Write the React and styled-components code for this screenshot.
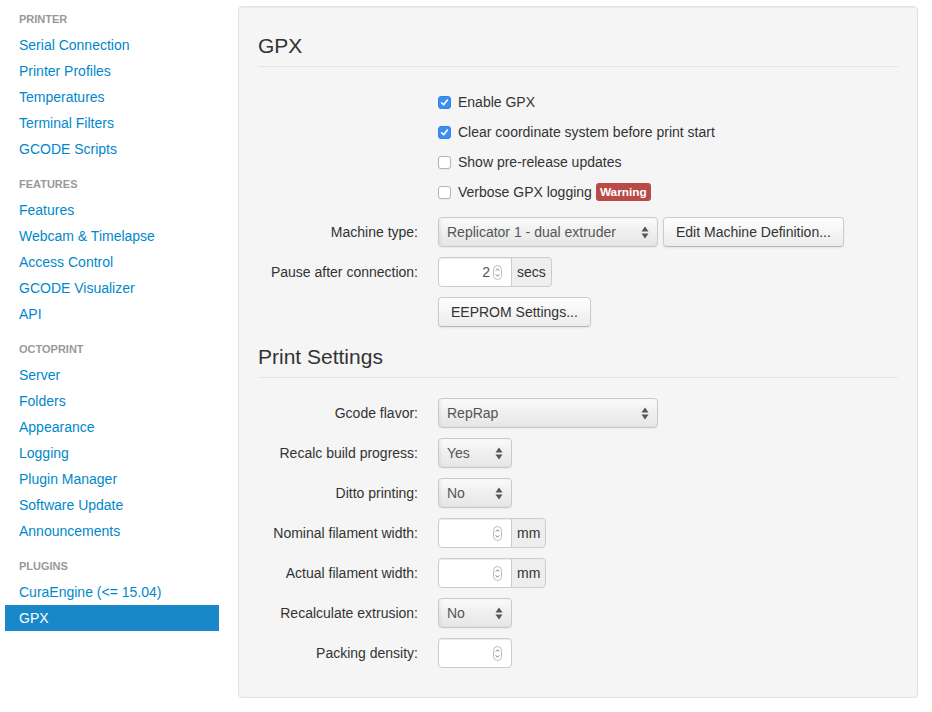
import React from "react";
import styled, { createGlobalStyle } from "styled-components";

const Global = createGlobalStyle`
  html, body { margin: 0; padding: 0; background: #fff; }
  body { font-family: "Liberation Sans", Arial, sans-serif; font-size: 14px; line-height: 20px; color: #333; }
  * { box-sizing: border-box; }
`;

const Page = styled.div`
  display: flex;
  align-items: flex-start;
  width: 932px;
  height: 712px;
  padding-top: 6px;
`;

const Sidebar = styled.ul`
  list-style: none;
  margin: 0 0 0 5px;
  padding: 0;
  width: 214px;
  flex: none;
`;

const NavHeader = styled.li`
  padding: 3px 14px;
  font-size: 11px;
  line-height: 20px;
  font-weight: bold;
  color: #999;
  text-transform: uppercase;
  text-shadow: 0 1px 0 rgba(255,255,255,.5);
  margin-top: ${(p) => (p.$first ? 0 : 9)}px;
`;

const NavItem = styled.li`
  padding: 3px 14px;
  font-size: 14px;
  line-height: 20px;
  color: ${(p) => (p.$active ? "#fff" : "#0088cc")};
  background: ${(p) => (p.$active ? "#1888c9" : "transparent")};
  cursor: pointer;
`;

const Panel = styled.div`
  margin-left: 19px;
  width: 680px;
  background: #f5f5f5;
  border: 1px solid #e3e3e3;
  border-radius: 4px;
  padding: 19px;
  box-shadow: inset 0 1px 1px rgba(0,0,0,.05);
`;

const Legend = styled.div`
  font-size: 21px;
  line-height: 40px;
  color: #333;
  border-bottom: 1px solid #e5e5e5;
  margin-bottom: 20px;
`;

const Group = styled.div`
  display: flex;
  margin-bottom: 10px;
`;

const Label = styled.div`
  width: 160px;
  flex: none;
  text-align: right;
  padding-top: 5px;
  line-height: 20px;
`;

const Controls = styled.div`
  margin-left: 20px;
  display: flex;
  flex-direction: ${(p) => (p.$stack ? "column" : "row")};
  align-items: ${(p) => (p.$stack ? "flex-start" : "center")};
  gap: ${(p) => (p.$stack ? 0 : 5)}px;
`;

const CheckLabel = styled.label`
  display: flex;
  align-items: center;
  padding: 5px 0;
  line-height: 20px;
  gap: 7px;
`;

const Box = styled.span`
  width: 13px;
  height: 13px;
  flex: none;
  border-radius: 3px;
  display: inline-flex;
  align-items: center;
  justify-content: center;
  background: ${(p) => (p.$checked ? "#3a8ff2" : "#fff")};
  border: 1px solid ${(p) => (p.$checked ? "#3483e6" : "#b4b4b4")};
  box-shadow: ${(p) => (p.$checked ? "none" : "0 1px 1px rgba(0,0,0,.06)")};
`;

const Badge = styled.span`
  display: inline-block;
  background: #b94a48;
  color: #fff;
  font-weight: bold;
  font-size: 11.8px;
  line-height: 14px;
  padding: 2px 4px;
  border-radius: 3px;
  margin-left: -3px;
`;

const Select = styled.div`
  width: ${(p) => p.$w}px;
  height: 30px;
  border: 1px solid #c9c9c9;
  border-radius: 4px;
  background: linear-gradient(to bottom, #fbfbfb 0%, #efefef 50%, #e6e6e6 100%);
  box-shadow: inset 2px 0 3px rgba(0,0,0,.05), 0 1px 1px rgba(0,0,0,.05);
  display: flex;
  align-items: center;
  justify-content: space-between;
  padding: 0 8px 0 8px;
  color: #555;
  font-size: 14px;
`;

const Button = styled.div`
  height: 30px;
  padding: 4px 12px;
  line-height: 20px;
  font-size: 14px;
  color: #333;
  border: 1px solid #ccc;
  border-bottom-color: #b8b8b8;
  border-radius: 4px;
  background: linear-gradient(to bottom, #fff, #ebebeb);
  box-shadow: inset 0 1px 0 rgba(255,255,255,.2), 0 1px 2px rgba(0,0,0,.08);
  white-space: nowrap;
`;

const Append = styled.div`
  display: flex;
`;

const Input = styled.div`
  width: 74px;
  height: 30px;
  background: #fff;
  border: 1px solid #ccc;
  border-radius: ${(p) => (p.$appended ? "4px 0 0 4px" : "4px")};
  box-shadow: inset 0 1px 1px rgba(0,0,0,.075);
  display: flex;
  align-items: center;
  justify-content: flex-end;
  gap: 3px;
  padding: 0 9px 0 6px;
  color: #555;
  font-size: 14px;
`;

const AddOn = styled.div`
  height: 30px;
  margin-left: -1px;
  padding: 4px 5px;
  line-height: 20px;
  background: #eee;
  border: 1px solid #ccc;
  border-radius: 0 4px 4px 0;
  color: #333;
  font-size: 14px;
`;

const Check = () => (
  <svg width="9" height="9" viewBox="0 0 9 9">
    <path d="M1.6 4.8 L3.6 6.8 L7.4 2" fill="none" stroke="#fff" strokeWidth="1.6" strokeLinecap="round" strokeLinejoin="round" />
  </svg>
);

const Arrows = () => (
  <svg width="8" height="13" viewBox="0 0 8 13">
    <path d="M4 0.5 L7.5 5.5 L0.5 5.5 Z" fill="#555" />
    <path d="M4 12.5 L7.5 7.5 L0.5 7.5 Z" fill="#555" />
  </svg>
);

const Spinner = () => (
  <svg width="9" height="15" viewBox="0 0 9 15">
    <rect x="0.5" y="0.5" width="8" height="14" rx="4" fill="#fff" stroke="#bdbdbd" />
    <path d="M2.8 5.6 L4.5 3.8 L6.2 5.6" fill="none" stroke="#777" strokeWidth="1" />
    <path d="M2.8 9.4 L4.5 11.2 L6.2 9.4" fill="none" stroke="#777" strokeWidth="1" />
  </svg>
);

const CheckItem = ({ checked, children }) => (
  <CheckLabel>
    <Box $checked={checked}>{checked && <Check />}</Box>
    {children}
  </CheckLabel>
);

const Row = ({ label, children }) => (
  <Group>
    <Label>{label}</Label>
    <Controls>{children}</Controls>
  </Group>
);

const SelectBox = ({ w, value }) => (
  <Select $w={w}>
    <span>{value}</span>
    <Arrows />
  </Select>
);

const NumberInput = ({ value, unit }) =>
  unit ? (
    <Append>
      <Input $appended>
        <span>{value}</span>
        <Spinner />
      </Input>
      <AddOn>{unit}</AddOn>
    </Append>
  ) : (
    <Input>
      <span>{value}</span>
      <Spinner />
    </Input>
  );

const nav = [
  ["Printer", ["Serial Connection", "Printer Profiles", "Temperatures", "Terminal Filters", "GCODE Scripts"]],
  ["Features", ["Features", "Webcam & Timelapse", "Access Control", "GCODE Visualizer", "API"]],
  ["OctoPrint", ["Server", "Folders", "Appearance", "Logging", "Plugin Manager", "Software Update", "Announcements"]],
  ["Plugins", ["CuraEngine (<= 15.04)", "GPX"]],
];

export default function App() {
  return (
    <>
      <Global />
      <Page>
        <Sidebar>
          {nav.map(([head, items], i) => (
            <React.Fragment key={head}>
              <NavHeader $first={i === 0}>{head}</NavHeader>
              {items.map((it) => (
                <NavItem key={it} $active={it === "GPX"}>{it}</NavItem>
              ))}
            </React.Fragment>
          ))}
        </Sidebar>
        <Panel>
          <Legend>GPX</Legend>
          <Group>
            <Label />
            <Controls $stack>
              <CheckItem checked>Enable GPX</CheckItem>
              <CheckItem checked>Clear coordinate system before print start</CheckItem>
              <CheckItem>Show pre-release updates</CheckItem>
              <CheckItem>
                Verbose GPX logging <Badge>Warning</Badge>
              </CheckItem>
            </Controls>
          </Group>
          <Row label="Machine type:">
            <SelectBox w={220} value="Replicator 1 - dual extruder" />
            <Button>Edit Machine Definition...</Button>
          </Row>
          <Row label="Pause after connection:">
            <NumberInput value="2" unit="secs" />
          </Row>
          <Row label="">
            <Button>EEPROM Settings...</Button>
          </Row>
          <Legend>Print Settings</Legend>
          <Row label="Gcode flavor:">
            <SelectBox w={220} value="RepRap" />
          </Row>
          <Row label="Recalc build progress:">
            <SelectBox w={74} value="Yes" />
          </Row>
          <Row label="Ditto printing:">
            <SelectBox w={74} value="No" />
          </Row>
          <Row label="Nominal filament width:">
            <NumberInput value="" unit="mm" />
          </Row>
          <Row label="Actual filament width:">
            <NumberInput value="" unit="mm" />
          </Row>
          <Row label="Recalculate extrusion:">
            <SelectBox w={74} value="No" />
          </Row>
          <Row label="Packing density:">
            <NumberInput value="" />
          </Row>
        </Panel>
      </Page>
    </>
  );
}
